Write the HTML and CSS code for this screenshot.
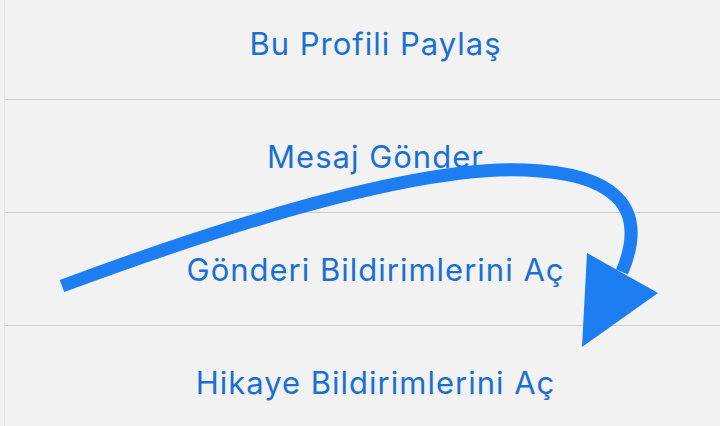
FILE: index.html
```html
<!DOCTYPE html>
<html lang="tr">

<head>
  <meta charset="UTF-8">
  <meta name="viewport" content="width=device-width, initial-scale=1.0">
  <title>Profil Seçenekleri</title>
  <link rel="stylesheet" href="styles.css">
</head>

<body>
  <!-- Profil menüsü -->
  <div class="sheet">
    <button class="sheet-item">Bu Profili Paylaş</button>
    <button class="sheet-item">Mesaj Gönder</button>
    <button class="sheet-item">Gönderi Bildirimlerini Aç</button>
    <button class="sheet-item">Hikaye Bildirimlerini Aç</button>
  </div>

  <!-- Ok işareti -->
  <svg class="arrow" width="720" height="426" viewBox="0 0 720 426">
    <path d="M62 286 C 240 220, 420 166, 525 170 C 612 173, 650 205, 622 272"
      fill="none" stroke="#1c7ef0" stroke-width="13" />
    <polygon points="587,253 658,293 582,347" fill="#1c7ef0" />
  </svg>
</body>

</html>
```

FILE: styles.css
```css
body {
  margin: 0;
  padding: 0;
  background-color: #f2f2f2;
  font-family: Inter, "Noto Sans", sans-serif;
  overflow: hidden;
  height: 426px;
  position: relative;
}

.sheet {
  display: flex;
  flex-direction: column;
  margin-top: -13px;
  margin-left: 4px;
  border-left: 1px solid #e4e4e4;
}

.sheet-item {
  height: 113px;
  display: flex;
  align-items: center;
  justify-content: center;
  padding: 0 0 0 26px;
  border: none;
  border-bottom: 1px solid #cdcdcd;
  background: none;
  color: #1a70d2;
  font-family: inherit;
  font-size: 31px;
  font-weight: 400;
  letter-spacing: 1px;
  cursor: pointer;
}

.arrow {
  position: absolute;
  top: 0;
  left: 0;
  pointer-events: none;
}
```
